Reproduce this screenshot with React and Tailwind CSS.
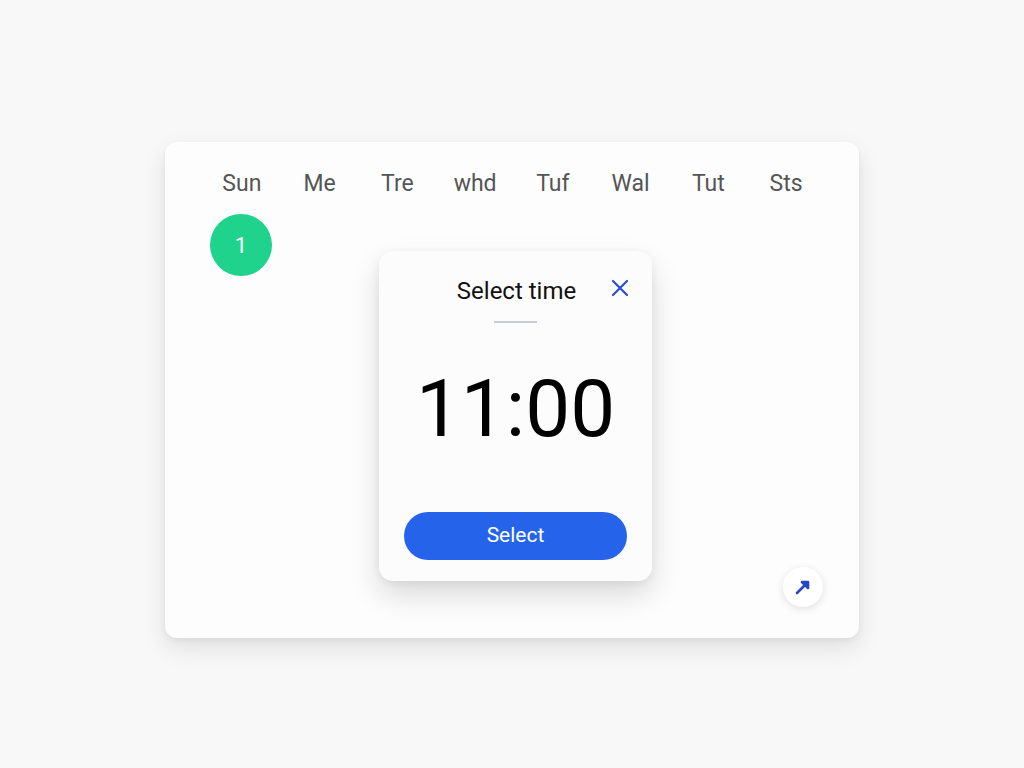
import React from 'react';

const days = ['Sun', 'Me', 'Tre', 'whd', 'Tuf', 'Wal', 'Tut', 'Sts'];

const App = () => {
    return (
        <div className="min-h-screen w-full bg-[#f8f8f8] flex items-start justify-center pt-[142px] font-['Roboto',sans-serif]">
            <div className="relative w-[694px] h-[496px] bg-[#fdfdfd] rounded-[12px] shadow-[0_10px_24px_rgba(0,0,0,0.10),0_2px_6px_rgba(0,0,0,0.05)]">
                <div className="grid grid-cols-8 pl-[38px] pr-[34px] pt-[27px]">
                    {days.map((d, i) => (
                        <div key={i} className="text-center text-[23px] leading-[30px] text-[#555]">{d}</div>
                    ))}
                </div>
                <div className="pl-[45px] pt-[15px]">
                    <div className="w-[62px] h-[62px] rounded-full bg-[#1fd38d] flex items-center justify-center text-white text-[22px]">1</div>
                </div>

                {/* time picker dialog */}
                <div className="absolute left-[214px] top-[109px] w-[273px] h-[330px] bg-[#fcfcfc] rounded-[14px] shadow-[0_14px_30px_rgba(0,0,0,0.14),0_2px_8px_rgba(0,0,0,0.06)] flex flex-col items-center">
                    <div className="relative w-full flex justify-center pt-[25px]">
                        <span className="text-[24px] leading-[30px] text-[#111] ml-[2px]">Select time</span>
                        <button className="absolute right-[22px] top-[27px] text-[#2a4fd0]">
                            <svg width="20" height="20" viewBox="0 0 20 20" fill="none" stroke="currentColor" strokeWidth="2.2" strokeLinecap="round">
                                <path d="M3 3L17 17M17 3L3 17" />
                            </svg>
                        </button>
                    </div>
                    <div className="w-[43px] h-[2px] bg-[#c9cdd1] mt-[15px]" />
                    <div className="mt-[46px] text-[80px] leading-[80px] text-black">11:00</div>
                    <button className="mt-[63px] w-[223px] h-[48px] rounded-full bg-[#2563eb] text-white text-[21px]">Select</button>
                </div>

                <button className="absolute right-[36px] bottom-[31px] w-[40px] h-[40px] rounded-full bg-white shadow-[0_2px_8px_rgba(0,0,0,0.12)] flex items-center justify-center text-[#2445c7]">
                    <svg width="20" height="20" viewBox="0 0 20 20" fill="none" stroke="currentColor" strokeWidth="2.6" strokeLinecap="round">
                        <path d="M4 16L13 7" />
                        <path d="M9 5h6v6z" fill="currentColor" strokeLinejoin="round" />
                    </svg>
                </button>
            </div>
        </div>
    );
};

export default App;
